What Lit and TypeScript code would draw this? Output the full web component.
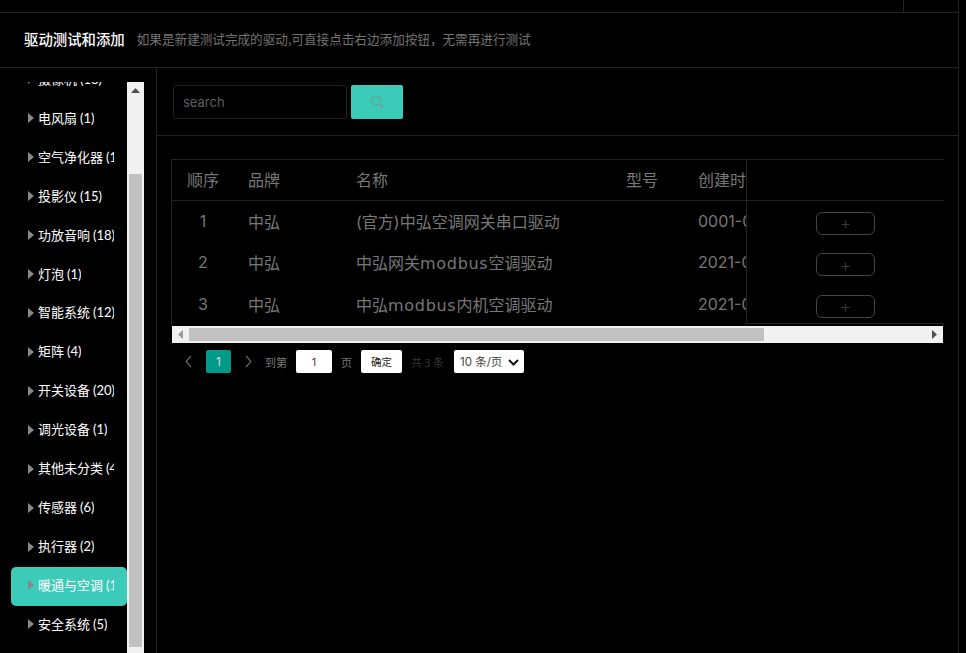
import { LitElement, html, css, svg } from "lit";
import { customElement } from "lit/decorators.js";

const categories = [
  ["摄像机", "(18)"], ["电风扇", "(1)"], ["空气净化器", "(1)"], ["投影仪", "(15)"], ["功放音响", "(18)"],
  ["灯泡", "(1)"], ["智能系统", "(12)"], ["矩阵", "(4)"], ["开关设备", "(20)"], ["调光设备", "(1)"],
  ["其他未分类", "(4)"], ["传感器", "(6)"], ["执行器", "(2)"], ["暖通与空调", "(1)"], ["安全系统", "(5)"],
];
const rows = [
  ["1", "中弘", "(官方)中弘空调网关串口驱动", "", "0001-01-01"],
  ["2", "中弘", "中弘网关modbus空调驱动", "", "2021-01-01"],
  ["3", "中弘", "中弘modbus内机空调驱动", "", "2021-01-01"],
];

@customElement("app-root")
export class AppRoot extends LitElement {
  static styles = css`
    :host { display: block; width: 966px; height: 653px; background: #000; overflow: hidden;
      font-family: "Noto Sans CJK SC", "Open Sans", sans-serif; }
    .latin { font-family: "Inter", "Noto Sans CJK SC", sans-serif; }
    .frame { width: 958px; height: 653px; border-right: 1px solid #222; display: flex; flex-direction: column; }
    .strip { height: 12px; flex: none; border-bottom: 1px solid #222; display: flex; justify-content: flex-end; padding-right: 54px; }
    .strip i { width: 1px; background: #222; }
    .head { height: 55px; flex: none; border-bottom: 1px solid #222; display: flex; align-items: center; padding: 0 0 3px 24px; box-sizing: border-box; gap: 12px; }
    .head b { font-size: 14.4px; font-weight: 500; color: #fff; }
    .head span { font-size: 12.6px; color: #747474; }
    .body { flex: 1; display: flex; min-height: 0; }
    .side { flex: none; border-right: 1px solid #222; padding: 14px 12px 0 11px; width: 133px; display: flex; }
    .list { width: 116px; flex: none; overflow: hidden; height: 100%; }
    .items { margin-top: -21px; }
    .item { height: 38.93px; display: flex; align-items: center; padding: 0 13px 4px 17px; border-radius: 5px; box-sizing: border-box; white-space: nowrap; overflow: hidden; color: #fff; font-size: 13px; }
    .item.on { background: #3ccbb9; }
    .tri { width: 0; height: 0; flex: none; border-left: 6px solid #888; border-top: 5px solid transparent; border-bottom: 5px solid transparent; margin: 2px 4px 0 0; }
    .label { overflow: hidden; }
    .count { font-family: "Lato", sans-serif; }
    .vbar { width: 17px; flex: none; background: #f1f1f1; display: flex; flex-direction: column; align-items: center; height: 100%; }
    .vbtn { height: 17px; flex: none; display: flex; align-items: center; justify-content: center; }
    .vgap { height: 75px; flex: none; }
    .vthumb { width: 13px; height: 473px; flex: none; background: #c1c1c1; }
    .main { flex: 1; min-width: 0; display: flex; flex-direction: column; }
    .search { flex: none; border-bottom: 1px solid #222; box-sizing: border-box; height: 68px; display: flex; align-items: center; padding-left: 16px; gap: 4px; }
    .input { width: 174px; height: 34px; box-sizing: border-box; border: 1px solid #222; border-radius: 3px; padding-left: 9px; display: flex; align-items: center; color: #5f5f5f; font-size: 13px; }
    .sbtn { width: 52px; height: 34px; background: #3ccbb9; border-radius: 2px; display: flex; align-items: center; justify-content: center; }
    .wrap { margin: 23px 0 0 14px; width: 773px; }
    .table { position: relative; border: 1px solid #222; border-right: none; border-bottom: none; overflow: hidden; height: 166px; box-sizing: border-box; }
    .tr { display: grid; grid-template-columns: 62px 108px 270px 72px 200px; width: 800px; }
    .tr > div { padding-left: 14px; white-space: nowrap; overflow: hidden; font-size: 16px; color: #777; }
    .tr > div:first-child { padding: 0; text-align: center; }
    .thead { height: 41px; border-bottom: 1px solid #222; box-sizing: border-box; align-items: center; padding-bottom: 2px; }
    .trow { height: 41.5px; box-sizing: border-box; padding-bottom: 2px; align-items: center; font-family: "Inter", "Noto Sans CJK SC", sans-serif; }
    .word { font-family: "DejaVu Sans", sans-serif; letter-spacing: 0.7px; }
    .fixed { position: absolute; top: 0; right: 0; bottom: 1px; width: 198px; background: #000; border-left: 1px solid #222; border-bottom: 1px solid #222; box-sizing: border-box; }
    .fhead { height: 41px; border-bottom: 1px solid #222; box-sizing: border-box; }
    .fcell { height: 41.5px; display: flex; align-items: center; justify-content: center; }
    .plus { width: 59px; height: 23px; box-sizing: border-box; border: 1px solid #444; border-radius: 6px; display: flex; align-items: center; justify-content: center; color: #3a3a3a; font-size: 16px; margin-top: 3px; }
    .hbar { height: 17px; background: #f1f1f1; display: flex; align-items: center; margin: 1px 1px 0; }
    .hbtn { width: 17px; height: 17px; flex: none; display: flex; align-items: center; justify-content: center; }
    .hthumb { width: 575px; height: 13px; flex: none; background: #c1c1c1; }
    .grow { flex: 1; }
    .pager { display: flex; align-items: center; height: 23px; margin-top: 7px; font-size: 11px; color: #777; padding-left: 14px; }
    .num { width: 25px; height: 23px; background: #009a8a; border-radius: 2px; color: #ddd; display: flex; align-items: center; justify-content: center; font-size: 12px; margin: 0 14px; }
    .to { margin-left: 13px; }
    .pinput { width: 36px; height: 23px; background: #fff; border-radius: 2px; color: #633; display: flex; align-items: center; justify-content: center; font-size: 11px; margin: 0 9px; }
    .ok { width: 41px; height: 23px; background: #fff; border-radius: 2px; color: #222; display: flex; align-items: center; justify-content: center; margin: 0 9px; font-size: 10.5px; }
    .total { color: #333; margin-right: 10px; }
    .sel { position: relative; width: 70px; height: 23px; }
    select { appearance: none; width: 70px; height: 23px; background: #fff; color: #444; border: none; border-radius: 2px; font: 11.5px "Inter", "Noto Sans CJK SC", sans-serif; padding: 0 0 0 6px; display: block; }
    .arrow { position: absolute; right: 5px; top: 9px; pointer-events: none; }
  `;

  word(text: string) {
    return text.split(/([a-z]+)/).map((part, i) => (i % 2 ? html`<span class="word">${part}</span>` : part));
  }

  render() {
    return html`<div class="frame">
      <div class="strip"><i></i></div>
      <div class="head"><b>驱动测试和添加</b><span>如果是新建测试完成的驱动,可直接点击右边添加按钮，无需再进行测试</span></div>
      <div class="body">
        <div class="side">
          <div class="list"><div class="items">
            ${categories.map((c) => html`<div class="item ${c[0] === "暖通与空调" ? "on" : ""}"><i class="tri"></i><span class="label"><span>${c[0]}</span> <span class="count">${c[1]}</span></span></div>`)}
          </div></div>
          <div class="vbar">
            <div class="vbtn"><svg width="9" height="5"><path d="M4.5 0L9 5H0z" fill="#505050"/></svg></div>
            <div class="vgap"></div>
            <div class="vthumb"></div>
          </div>
        </div>
        <div class="main">
          <div class="search">
            <div class="input latin">search</div>
            <div class="sbtn"><svg width="13" height="13" viewBox="0 0 13 13" fill="none" stroke="#6a9f98" stroke-width="1.1"><circle cx="5" cy="5.5" r="4.4"/><path d="M8.6 9.1l3.4 3.4" stroke-width="1.8"/></svg></div>
          </div>
          <div class="wrap">
            <div class="table">
              <div class="tr thead"><div>顺序</div><div>品牌</div><div>名称</div><div>型号</div><div>创建时间</div></div>
              ${rows.map((r) => html`<div class="tr trow">${r.map((v) => html`<div>${this.word(v)}</div>`)}</div>`)}
              <div class="fixed">
                <div class="fhead"></div>
                ${rows.map(() => html`<div class="fcell"><div class="plus">+</div></div>`)}
              </div>
            </div>
            <div class="hbar">
              <div class="hbtn"><svg width="5" height="9"><path d="M0 4.5L5 0V9z" fill="#999"/></svg></div>
              <div class="hthumb"></div>
              <div class="grow"></div>
              <div class="hbtn"><svg width="5" height="9"><path d="M5 4.5L0 0V9z" fill="#505050"/></svg></div>
            </div>
            <div class="pager">
              ${this.chevron("M6 1L1 6.5L6 12")}
              <div class="num latin">1</div>
              ${this.chevron("M1 1L6 6.5L1 12")}
              <span class="to">到第</span>
              <div class="pinput latin">1</div>
              <span>页</span>
              <div class="ok">确定</div>
              <span class="total">共 3 条</span>
              <div class="sel">
                <select><option>10 条/页</option></select>
                <svg class="arrow" width="11" height="7" fill="none" stroke="#111" stroke-width="2"><path d="M1 1l4.5 4.5L10 1"/></svg>
              </div>
            </div>
          </div>
        </div>
      </div>
    </div>`;
  }

  chevron(d: string) {
    return html`<svg width="7" height="13" fill="none" stroke="#666" stroke-width="1.2">${svg`<path d=${d} />`}</svg>`;
  }
}
